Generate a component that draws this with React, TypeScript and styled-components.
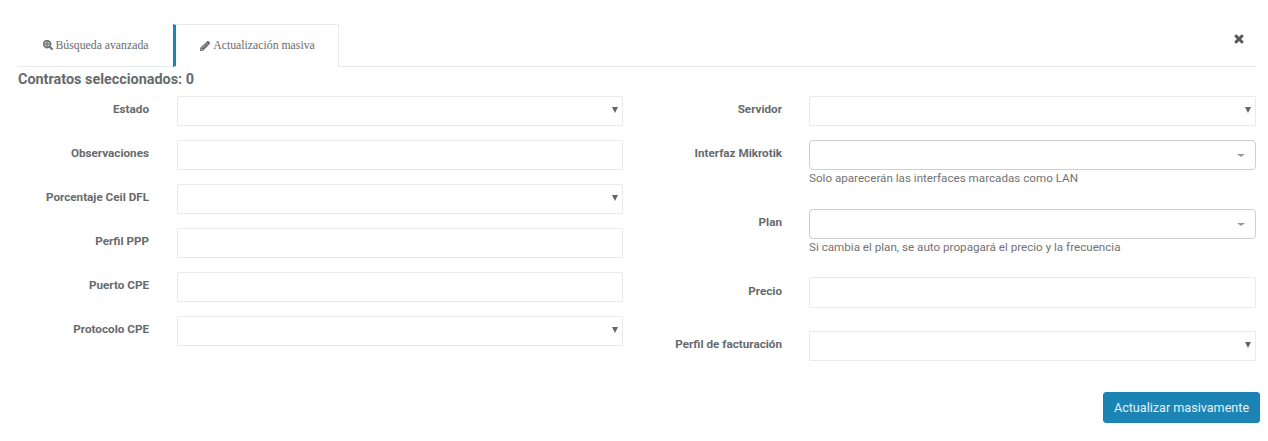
import styled, { createGlobalStyle } from "styled-components";
import { FaPencilAlt, FaSearchPlus, FaTimes } from "react-icons/fa";

const GlobalStyle = createGlobalStyle`
    html, body {
        margin: 0;
        padding: 0;
        background: #fff;
    }
`

type FieldTypes = {
    label: string
    kind?: "input" | "select" | "select2"
    help?: string
    spacing?: number
    tall?: boolean
}

const Field = ({label, kind = "input", help, spacing = 14, tall}: FieldTypes) => {
    return (
        <FieldRow $spacing={spacing}>
            <FieldLabel $tall={tall}>{label}</FieldLabel>
            <div>
                {kind === "select2" ? (
                    <Select2Box>
                        <Select2Caret/>
                    </Select2Box>
                ) : (
                    <InputBox $tall={tall}>
                        {kind === "select" && <NativeCaret/>}
                    </InputBox>
                )}
                {help && <HelpText>{help}</HelpText>}
            </div>
        </FieldRow>
    );
};

export default function App() {
    return (
        <Page>
            <GlobalStyle/>
            <TabBar>
                <Tab>
                    <FaSearchPlus size={10}/>
                    Búsqueda avanzada
                </Tab>
                <ActiveTab>
                    <FaPencilAlt size={10}/>
                    Actualización masiva
                </ActiveTab>
                <CloseButton>
                    <FaTimes size={12}/>
                </CloseButton>
            </TabBar>
            <Heading>Contratos seleccionados: 0</Heading>
            <Columns>
                <LeftColumn>
                    <Field label="Estado" kind="select"/>
                    <Field label="Observaciones"/>
                    <Field label="Porcentaje Ceil DFL" kind="select"/>
                    <Field label="Perfil PPP"/>
                    <Field label="Puerto CPE"/>
                    <Field label="Protocolo CPE" kind="select"/>
                </LeftColumn>
                <RightColumn>
                    <Field label="Servidor" kind="select"/>
                    <Field label="Interfaz Mikrotik" kind="select2" spacing={14}
                           help="Solo aparecerán las interfaces marcadas como LAN"/>
                    <Field label="Plan" kind="select2" spacing={13}
                           help="Si cambia el plan, se auto propagará el precio y la frecuencia"/>
                    <Field label="Precio" spacing={23} tall/>
                    <Field label="Perfil de facturación" kind="select"/>
                </RightColumn>
            </Columns>
            <Footer>
                <SubmitButton>Actualizar masivamente</SubmitButton>
            </Footer>
        </Page>
    );
}

const Page = styled.div`
    box-sizing: border-box;
    width: 1268px;
    height: 441px;
    padding: 24px 12px 0 18px;
    overflow: hidden;
    font-family: Roboto, sans-serif;
    color: #676a6c;
`

const TabBar = styled.div`
    display: flex;
    height: 43px;
    box-sizing: border-box;
    border-bottom: 1px solid #e7eaec;
`

const Tab = styled.div`
    display: flex;
    align-items: center;
    justify-content: center;
    gap: 3px;
    box-sizing: border-box;
    width: 155px;
    height: 42px;
    font-family: "Liberation Serif", serif;
    font-size: 11.75px;
    color: #676a6c;

    svg {
        stroke: currentColor;
        stroke-width: 24px;
    }
`

const ActiveTab = styled(Tab)`
    width: 166px;
    height: 43px;
    padding-left: 1px;
    background: #fff;
    border: 1px solid #e7eaec;
    border-left: 3px solid #1c84b5;
    border-bottom: 1px solid #fff;
`

const CloseButton = styled.div`
    margin-left: auto;
    margin-right: 11px;
    margin-top: 9px;
    height: 12px;
    color: #555;
    line-height: 0;

    svg {
        stroke: currentColor;
        stroke-width: 40px;
    }
`

const Heading = styled.div`
    margin-top: 4px;
    height: 25px;
    font-size: 14.4px;
    font-weight: 700;
    line-height: 17px;
    color: #676a6c;
`

const Columns = styled.div`
    display: grid;
    grid-template-columns: 605px 592px;
    column-gap: 41px;
`

const LeftColumn = styled.div`
    --label-width: 131px;
    --label-gap: 28px;
`

const RightColumn = styled.div`
    --label-width: 118px;
    --label-gap: 27px;
`

const FieldRow = styled.div<{ $spacing: number }>`
    display: grid;
    grid-template-columns: var(--label-width) 1fr;
    column-gap: var(--label-gap);
    margin-bottom: ${({$spacing}) => $spacing}px;
`

const FieldLabel = styled.label<{ $tall?: boolean }>`
    padding-top: ${({$tall}) => ($tall ? 8 : 7)}px;
    font-size: 11.7px;
    font-weight: 700;
    line-height: 13px;
    text-align: right;
    white-space: nowrap;
    color: #676a6c;
`

const InputBox = styled.div<{ $tall?: boolean }>`
    position: relative;
    box-sizing: border-box;
    height: ${({$tall}) => ($tall ? 31 : 30)}px;
    background: #fff;
    border: 1px solid #e9eaeb;
    border-radius: 1px;
`

const NativeCaret = styled.span`
    position: absolute;
    top: 10px;
    right: 4px;
    width: 0;
    height: 0;
    border-left: 3px solid transparent;
    border-right: 3px solid transparent;
    border-top: 6px solid #666;
`

const Select2Box = styled.div`
    position: relative;
    box-sizing: border-box;
    height: 30px;
    background: #fff;
    border: 1px solid #cfcfcf;
    border-radius: 4px;
`

const Select2Caret = styled.span`
    position: absolute;
    top: 13px;
    right: 10px;
    width: 0;
    height: 0;
    border-left: 4px solid transparent;
    border-right: 4px solid transparent;
    border-top: 3px solid #999;
`

const HelpText = styled.div`
    margin-top: 1px;
    height: 24px;
    font-size: 11.65px;
    line-height: 14px;
    white-space: nowrap;
    color: #737373;
`

const Footer = styled.div`
    display: flex;
    justify-content: flex-end;
    margin-top: 17px;
    margin-right: -4px;
`

const SubmitButton = styled.button`
    box-sizing: border-box;
    width: 157px;
    height: 31px;
    padding: 0;
    background: #1c84b5;
    border: 1px solid #1c84b5;
    border-radius: 3px;
    font-family: Roboto, sans-serif;
    font-size: 12.6px;
    color: #e4f1f7;
`
